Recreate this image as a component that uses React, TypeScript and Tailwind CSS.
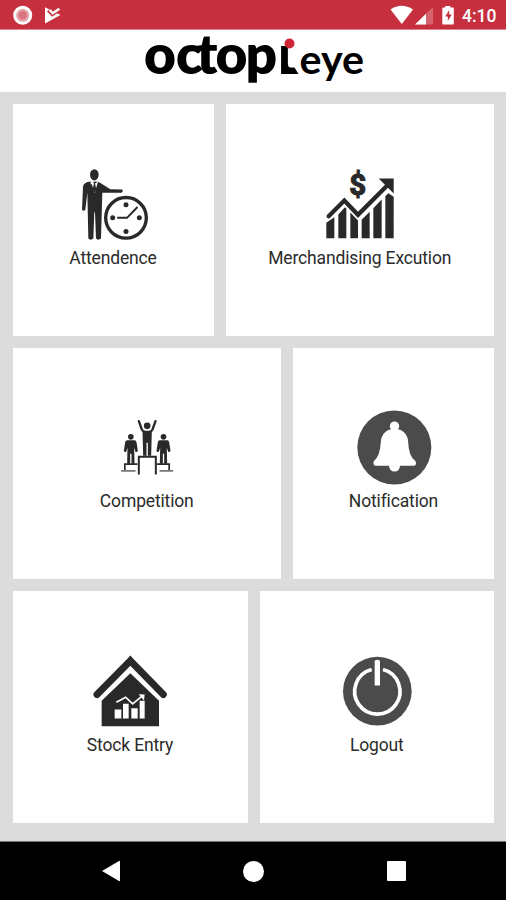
import type { ReactNode } from "react";

function StatusBar() {
  return (
    <header className="flex h-[30px] shrink-0 items-center justify-between border-b border-[#dc858d] bg-[#c6303e] pl-3 pr-2">
      <svg className="h-[29px] w-[52px]" viewBox="0 0 52 29">
        <circle cx="10.7" cy="15.3" r="8.3" fill="#e6a3a9" />
        <circle cx="10.7" cy="15.3" r="8" fill="none" stroke="#fff" strokeWidth="3" />
        <circle cx="10.7" cy="15.3" r="4.2" fill="#d9747e" />
        <path d="M33 7.3 48.5 15 33 23.6Z" fill="#fff" />
        <path d="m36.5 10 4 4.2 8-6" fill="none" stroke="#c6303e" strokeWidth="4" />
        <path d="m37.5 9.7 3.3 3.5 6.6-4.4" fill="none" stroke="#fff" strokeWidth="2.4" />
      </svg>
      <div className="flex items-center">
        <svg className="h-[29px] w-[70px]" viewBox="388 0 70 29">
          <path d="M390.5 9.5q11-7.5 22.5 0L401.800 24Z" fill="#fff" />
          <path d="M415 24.5 433 7v17.5Z" fill="#d6626d" />
          <path d="M415 24.5 426 13.8v10.7Z" fill="#fff" />
          <path d="M442.3 8.5q0-1 1-1h2V6h5v1.5h2.5q1 0 1 1v15q0 1-1 1h-9.500q-1 0-1-1Z" fill="#fff" />
          <path d="m449.200 10-4 6.500h2.600v4.500l4-6.500h-2.600Z" fill="#c6303e" />
        </svg>
        <span className="ml-1 mt-[2px] w-[36px] whitespace-nowrap font-['Roboto',sans-serif] text-[17.5px] font-medium leading-5 text-white">4:10</span>
      </div>
    </header>
  );
}

function Logo() {
  return (
    <svg className="h-[62px] w-[226px] overflow-visible" viewBox="141 30 226 62" fontFamily="Lato, sans-serif">
      <text x="144 176 196.500 215.500 245.500 277.500" y="74" fontSize="55" fontWeight="800">
        octop<tspan fontWeight="700">i</tspan>
      </text>
      <path d="M278 31h15v15h-15Z" fill="#fff" />
      <path d="M281.500 64v2.500q0 7.500 7.500 7.500h9.500l-4-6.500h-4q-2.500 0-2.500-3.500Z" />
      <circle cx="289.500" cy="43.500" r="5" fill="#cf2435" />
      <text x="299.500" y="73.500" fontSize="40" fontWeight="700" textLength="64.500" lengthAdjust="spacingAndGlyphs">eye</text>
    </svg>
  );
}

function AttendanceIcon() {
  return (
    <svg className="size-20" viewBox="39 25.5 240 240" fill="#292929">
      <ellipse cx="103" cy="58" rx="13" ry="17" />
      <path d="M92 78Q70 80 69 94L66 163q5 6 10 0l6-52 3 138q7 7 15 0l3-79h2l3 79q7 7 15 0l4-137 27 0h31q6-4 2-10l-36-1-31-19q-6-4-17-4l-11 10Z" />
      <path d="m93 78 11 35 10-35-10 7Z" fill="#fff" />
      <path d="m102 83-4 19 6 9 5-9-4-19Z" />
      <circle cx="198" cy="187" r="61" fill="#fff" stroke="#292929" strokeWidth="10" />
      <circle cx="198" cy="148" r="7.500" />
      <circle cx="198" cy="228" r="7.500" />
      <circle cx="158" cy="187" r="7.500" />
      <circle cx="238" cy="187" r="7.500" />
      <path d="M174 187h27l30-31" fill="none" stroke="#292929" strokeWidth="6" strokeLinecap="round" />
    </svg>
  );
}

function MerchandisingIcon() {
  return (
    <svg className="size-20" viewBox="180 25.5 240 240" fill="#292929">
      <path d="M199 202l24-17v63h-24ZM235 177l20-22 4 4v89h-24ZM271 171l23 24v53h-23ZM305 193l24-24v79h-24ZM340 158l25-26v116h-25ZM376 122l9-9 16 11v124h-25Z" />
      <path d="m206 182 47-47 41 43 84-84" fill="none" stroke="#292929" strokeWidth="13" strokeLinecap="round" />
      <path d="M356 69h45v45Z" />
      <text x="293" y="119" textAnchor="middle" fontFamily="Roboto, sans-serif" fontSize="88" fontWeight="800" stroke="#292929" strokeWidth="3">$</text>
    </svg>
  );
}

function Runner({ x }: { x: number }) {
  return (
    <g transform={`translate(${x} 0)`}>
      <circle cx="0" cy="97" r="8.500" />
      <path d="M-11 107H11q5 0 6 6l4 26q-2 5-7 3l-4-12 1 48H2V148h-4v30h-9l1-48-4 12q-5 2-7-3l4-26q1-6 6-6Z" />
    </g>
  );
}

function CompetitionIcon() {
  return (
    <svg className="size-20" viewBox="49.5 7.5 240 240" fill="#292929">
      <circle cx="170" cy="64" r="10" />
      <path d="m145 50 9 25q3 6 9 7h14q6-1 9-7l9-25" fill="none" stroke="#292929" strokeWidth="7" strokeLinecap="round" strokeLinejoin="round" />
      <path d="M156 77q14 9 28 0l-2 77h-10v-39h-4v39h-10Z" />
      <Runner x={121} />
      <Runner x={219} />
      <path d="M145 210v-53h51v53" fill="none" stroke="#292929" strokeWidth="6" />
      <path d="M103 199v-20h38M199 179h37v20" fill="none" stroke="#292929" strokeWidth="5" />
      <path d="M92 199h43M207 199h41" stroke="#777" strokeWidth="5" />
    </svg>
  );
}

function NotificationIcon() {
  return (
    <svg className="size-20" viewBox="55.500 22.500 240 240">
      <circle cx="176.500" cy="144" r="111" fill="#4b4b4b" />
      <g fill="#fff">
        <circle cx="177" cy="80" r="14" />
        <path d="M160 91q17-5 34 0 22 9 24 36 1 44 22 58 5 10-4 14H120q-9-4-5-14 19-15 21-58 2-27 24-36Z" />
        <path d="M160 197h34q-2 19-17 19t-17-19Z" />
      </g>
    </svg>
  );
}

function StockIcon() {
  return (
    <svg className="size-20" viewBox="45 19.500 240 240">
      <path d="M80 245v-76l86-83 86 83v76Z" fill="#292929" />
      <path d="m66 150 100-101 99 101" fill="none" stroke="#292929" strokeWidth="21" strokeLinecap="round" />
      <path d="M150 55 166 33l16 22Z" fill="#292929" />
      <g fill="#fff">
        <path d="M119 195h20v27h-20ZM144 178h17v44h-17ZM169 191h19v31h-19ZM194 169h15v53h-15Z" />
        <path d="m191 149 18 1-2 18Z" />
      </g>
      <path d="m124 173 28-15 21 20 28-23" fill="none" stroke="#fff" strokeWidth="5" />
    </svg>
  );
}

function LogoutIcon() {
  return (
    <svg className="size-20" viewBox="21 19.500 240 240">
      <circle cx="142" cy="140" r="103" fill="#4b4b4b" />
      <path d="M125 75a68 68 0 1 0 34 0" fill="none" stroke="#fff" strokeWidth="11" />
      <path d="M134 49q8-6 16 0v74h-16Z" fill="#fff" />
    </svg>
  );
}

function Tile({ label, width, children }: { label: string; width: string; children: ReactNode }) {
  return (
    <button className={`flex h-full flex-col items-center justify-center bg-white ${width}`}>
      {children}
      <span className="mb-2 mt-1 whitespace-nowrap text-[17.5px] leading-5 tracking-[-0.15px] text-[#2b2b2b]">{label}</span>
    </button>
  );
}

export default function App() {
  return (
    <div className="flex h-[900px] w-[506px] flex-col overflow-hidden bg-[#dcdcdc] font-['Roboto',sans-serif]">
      <StatusBar />
      <div className="flex h-[62px] shrink-0 justify-center bg-white pl-[2px]">
        <Logo />
      </div>
      <main className="flex flex-1 flex-col gap-3 pl-[12.5px] pr-3 pt-3">
        <div className="flex h-[231.500px] gap-3">
          <Tile label="Attendence" width="w-[201px]"><AttendanceIcon /></Tile>
          <Tile label="Merchandising Excution" width="flex-1"><MerchandisingIcon /></Tile>
        </div>
        <div className="flex h-[231.500px] gap-3">
          <Tile label="Competition" width="flex-1"><CompetitionIcon /></Tile>
          <Tile label="Notification" width="w-[201px]"><NotificationIcon /></Tile>
        </div>
        <div className="flex h-[232px] gap-3">
          <Tile label="Stock Entry" width="w-[235px]"><StockIcon /></Tile>
          <Tile label="Logout" width="flex-1"><LogoutIcon /></Tile>
        </div>
      </main>
      <nav className="flex h-[59px] shrink-0 items-center justify-between border-t border-[#777] bg-black pl-[101px] pr-[100px]">
        <svg className="h-[22px] w-5" viewBox="0 0 20 22"><path d="M1 11 18 1q1-.5 1 .5v19q0 1-1 .5Z" fill="#fff" /></svg>
        <span className="size-[21px] rounded-full bg-white" />
        <span className="size-[19.500px] rounded-[1px] bg-white" />
      </nav>
    </div>
  );
}
